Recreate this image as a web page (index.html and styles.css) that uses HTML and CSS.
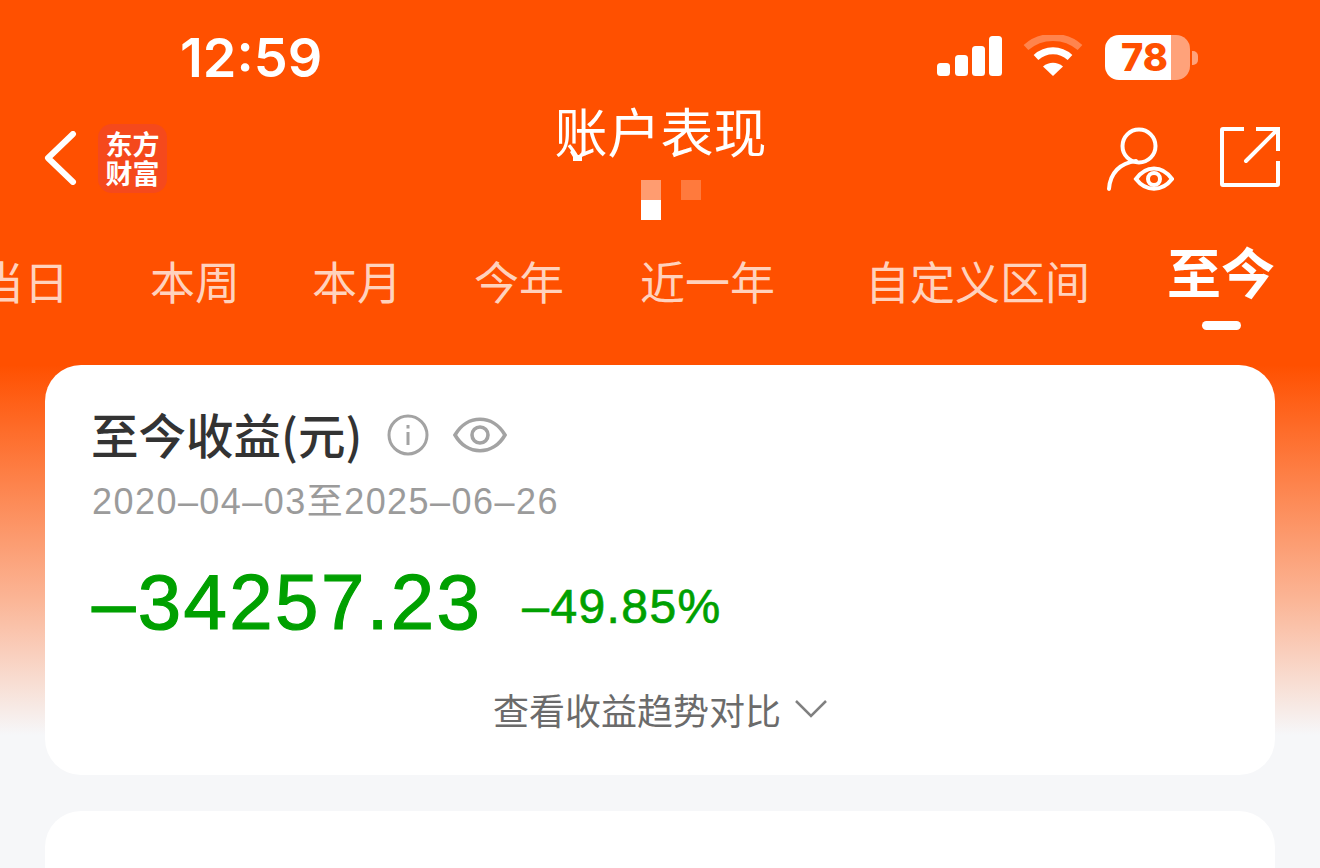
FILE: index.html
```html
<!DOCTYPE html>
<html lang="zh-CN">
<head>
    <meta charset="UTF-8">
    <meta name="viewport" content="width=device-width, initial-scale=1.0">
    <title>账户表现</title>
    <link rel="stylesheet" href="styles.css">
</head>
<body>
    <header class="status-bar">
        <div class="time">12:59</div>
        <div class="status-icons">
            <svg class="signal" width="66" height="42" viewBox="0 0 66 42">
                <rect x="1" y="28" width="13" height="13" rx="3.5" />
                <rect x="19" y="20" width="13" height="21" rx="3.5" />
                <rect x="36" y="11" width="13" height="30" rx="3.5" />
                <rect x="53" y="1" width="13" height="40" rx="3.5" />
            </svg>
            <svg class="wifi" width="60" height="42" viewBox="0 0 60 42" fill="none">
                <path d="M3 12.5C18 -1 42 -1 57 12.5" stroke="#fff" stroke-opacity=".3" stroke-width="7" />
                <path d="M13 22.5C23 13.5 37 13.5 47 22.5" stroke="#fff" stroke-width="7" />
                <path d="M30 41L20 31.5C26 26.5 34 26.5 40 31.5Z" fill="#fff" />
            </svg>
            <div class="battery">
                <div class="battery-body">78</div>
                <div class="battery-tip"></div>
            </div>
        </div>
    </header>

    <nav class="nav-bar">
        <div class="nav-left">
            <svg width="34" height="54" viewBox="0 0 34 54" fill="none">
                <path d="M30 3L5 27L30 51" stroke="#fff" stroke-width="6" stroke-linecap="round" stroke-linejoin="round" />
            </svg>
            <div class="logo"><span>东方</span><span>财富</span></div>
        </div>
        <div class="nav-title">
            <h1>账户表现</h1>
            <svg class="cursor" width="12" height="12" viewBox="0 0 12 12">
                <path d="M0 3L3 0L8 6H12V12H3V8Z" fill="#fff" />
            </svg>
            <div class="mosaic">
                <span class="cell cell-mid"></span>
                <span class="cell"></span>
                <span class="cell cell-dim"></span>
                <span class="cell cell-white"></span>
            </div>
        </div>
        <div class="nav-right">
            <svg width="68" height="64" viewBox="0 0 68 64" fill="none" stroke="#fff" stroke-width="4">
                <circle cx="33" cy="19" r="16.5" />
                <path d="M3 62C4 46 14 36 30 34" stroke-linecap="round" />
                <path d="M30 52C40 38 56 38 66 52C56 65 40 65 30 52Z" />
                <circle cx="48" cy="52" r="6" />
            </svg>
            <svg width="60" height="60" viewBox="0 0 60 60" fill="none" stroke="#fff" stroke-width="4">
                <path d="M24 2H3Q2 2 2 3V57Q2 58 3 58H57Q58 58 58 57V34" />
                <path d="M36 2H58V24" />
                <path d="M26 34L57 3" stroke-linecap="round" />
            </svg>
        </div>
    </nav>

    <div class="tabs">
        <span class="tab tab-first">当日</span>
        <span class="tab">本周</span>
        <span class="tab">本月</span>
        <span class="tab tab-wide">今年</span>
        <span class="tab tab-wider">近一年</span>
        <span class="tab">自定义区间</span>
        <span class="tab tab-active">至今</span>
    </div>

    <main class="content">
        <section class="card card-summary">
            <div class="card-head">
                <h2>至今收益(元)</h2>
                <svg width="42" height="42" viewBox="0 0 42 42" fill="none" stroke="#a3a3a3" stroke-width="3">
                    <circle cx="21" cy="21" r="19" />
                    <path d="M21 18V31" />
                    <path d="M21 11V14.500" />
                </svg>
                <svg width="54" height="40" viewBox="0 0 54 40" fill="none" stroke="#a3a3a3" stroke-width="3.600">
                    <path d="M2 20C14 -1 40 -1 52 20C40 41 14 41 2 20Z" />
                    <circle cx="27" cy="20" r="8" />
                </svg>
            </div>
            <div class="date-range">2020–04–03至2025–06–26</div>
            <div class="profit">
                <span class="profit-amount">–34257.23</span>
                <span class="profit-rate">–49.85%</span>
            </div>
            <div class="trend-toggle">
                <span>查看收益趋势对比</span>
                <svg width="34" height="20" viewBox="0 0 34 20" fill="none" stroke="#808080" stroke-width="2.500">
                    <path d="M2 2L17 17L32 2" />
                </svg>
            </div>
        </section>
        <section class="card card-next"></section>
    </main>
</body>
</html>
```

FILE: styles.css
```css
body {
    margin: 0;
    height: 868px;
    overflow: hidden;
    font-family: "Noto Sans CJK SC", sans-serif;
    color: #fff;
    background: linear-gradient(#ff5000 0, #ff5000 365px, #fbb596 600px, #f6f7f9 735px);
}
h1, h2 {
    margin: 0;
    font-weight: 400;
}
.status-bar {
    height: 112px;
    display: flex;
    justify-content: space-between;
    padding: 0 122px 0 180px;
    box-sizing: border-box;
}
.time {
    margin-top: 28px;
    font-family: Inter, sans-serif;
    font-size: 54px;
    line-height: 60px;
    font-weight: 600;
}
.status-icons {
    display: flex;
    align-items: flex-start;
    padding-top: 35px;
}
.signal {
    fill: #fff;
    margin-right: 21px;
}
.wifi {
    margin-right: 22px;
}
.battery {
    display: flex;
    align-items: center;
}
.battery-body {
    width: 85px;
    height: 45px;
    border-radius: 14px;
    background: linear-gradient(90deg, #fff 66px, #ffa27a 66px);
    color: #ff5000;
    font-family: Inter, sans-serif;
    font-size: 38px;
    line-height: 45px;
    font-weight: 800;
    padding-left: 16px;
    box-sizing: border-box;
}
.battery-tip {
    width: 6px;
    height: 14px;
    margin-left: 2px;
    border-radius: 0 5px 5px 0;
    background: #ffa27a;
}
.nav-bar {
    height: 139px;
    display: grid;
    grid-template-columns: 1fr auto 1fr;
    padding: 0 40px 0 43px;
}
.nav-left {
    display: flex;
    align-items: center;
    gap: 21px;
    height: 92px;
}
.logo {
    width: 69px;
    height: 69px;
    border-radius: 14px;
    background: #f5491c;
    display: flex;
    flex-direction: column;
    align-items: center;
    justify-content: center;
    font-size: 27px;
    line-height: 29px;
    font-weight: 700;
}
.logo span {
    display: block;
}
.nav-title {
    position: relative;
    display: flex;
    flex-direction: column;
    align-items: center;
}
.nav-title h1 {
    font-size: 53px;
    line-height: 44px;
    margin-top: -4px;
    margin-left: -2px;
    font-weight: 400;
}
.cursor {
    position: absolute;
    left: 13px;
    top: 37px;
}
.mosaic {
    display: grid;
    grid-template-columns: repeat(3, 20px);
    grid-auto-rows: 20px;
    margin-top: 28px;
    margin-left: 18px;
}
.cell-mid {
    background: #ff9c70;
}
.cell-dim {
    background: #ff7a3d;
}
.cell-white {
    background: #fff;
}
.nav-right {
    display: flex;
    justify-content: flex-end;
    align-items: flex-start;
    gap: 46px;
    padding-top: 15px;
}
.tabs {
    height: 114px;
    display: flex;
    align-items: flex-start;
    margin-left: -21px;
    gap: 72px;
    white-space: nowrap;
}
.tab {
    position: relative;
    font-size: 45px;
    line-height: 60px;
    color: #ffd2bd;
    flex: none;
}
.tab-first {
    margin-right: 9px;
}
.tab-wide {
    margin-right: 4px;
}
.tab-wider {
    margin-right: 18px;
}
.tab-active {
    margin-left: 5px;
    margin-top: -10px;
    font-size: 54px;
    font-weight: 700;
    color: #fff;
}
.tab-active::after {
    content: "";
    position: absolute;
    left: 35px;
    top: 80px;
    width: 39px;
    height: 9px;
    border-radius: 5px;
    background: #fff;
}
.content {
    display: flex;
    flex-direction: column;
    gap: 36px;
    padding: 0 45px;
}
.card {
    background: #fff;
    border-radius: 36px;
    flex: none;
}
.card-summary {
    height: 410px;
    padding: 38px 47px 0;
    box-sizing: border-box;
}
.card-next {
    height: 57px;
    border-radius: 36px 36px 0 0;
}
.card-head {
    display: flex;
    align-items: center;
    height: 64px;
}
.card-head h2 {
    font-size: 47.5px;
    line-height: 62px;
    margin-left: -1px;
    margin-top: -2px;
    color: #333;
    font-weight: 500;
    margin-right: 25px;
}
.card-head svg + svg {
    margin-left: 24px;
}
.date-range {
    margin-top: 12px;
    font-family: "Liberation Sans", "Noto Sans CJK SC", sans-serif;
    font-size: 36px;
    line-height: 46px;
    letter-spacing: 1.45px;
    color: #9b9b9b;
}
.profit {
    display: flex;
    align-items: flex-start;
    gap: 40px;
    margin-top: 32px;
    color: #00a000;
    font-family: "Liberation Sans", sans-serif;
    line-height: 90px;
}
.profit-amount {
    font-size: 78px;
    letter-spacing: 2.4px;
    -webkit-text-stroke: 1.2px #00a000;
}
.profit-rate {
    font-size: 48px;
    line-height: 80px;
    padding-top: 10px;
    letter-spacing: 1.4px;
    -webkit-text-stroke: .7px #00a000;
}
.trend-toggle {
    margin-top: 36px;
    padding-left: 1px;
    display: flex;
    justify-content: center;
    align-items: center;
    gap: 13px;
    font-size: 36px;
    line-height: 52px;
    color: #6b6b6b;
}
```
